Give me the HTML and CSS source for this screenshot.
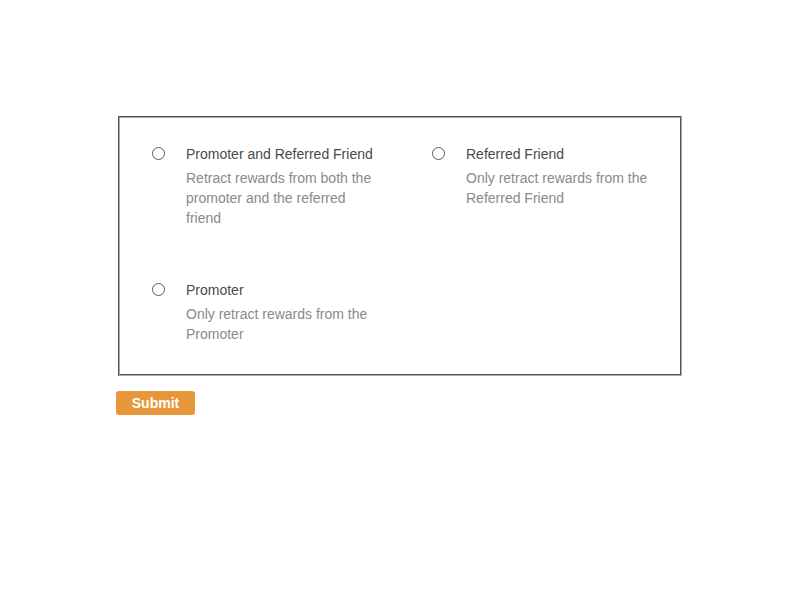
FILE: index.html
```html
<!DOCTYPE html>
<html>
<head>
<meta charset="utf-8">
<link rel="stylesheet" href="styles.css">
</head>
<body>
<form class="wrap">
  <fieldset class="box">
    <label class="opt">
      <input type="radio" name="retract" class="radio">
      <span class="txt">
        <span class="title">Promoter and Referred Friend</span>
        <span class="desc">Retract rewards from both the promoter and the referred friend</span>
      </span>
    </label>
    <label class="opt">
      <input type="radio" name="retract" class="radio">
      <span class="txt">
        <span class="title">Referred Friend</span>
        <span class="desc">Only retract rewards from the Referred Friend</span>
      </span>
    </label>
    <label class="opt">
      <input type="radio" name="retract" class="radio">
      <span class="txt">
        <span class="title">Promoter</span>
        <span class="desc">Only retract rewards from the Promoter</span>
      </span>
    </label>
  </fieldset>
  <button type="button" class="submit">Submit</button>
</form>
</body>
</html>
```
FILE: styles.css
```css
html, body {
  margin: 0;
  padding: 0;
  background: #fff;
}
body {
  font-family: "Liberation Sans", Arial, Helvetica, sans-serif;
  font-size: 14px;
  line-height: 20px;
}
.wrap {
  width: 568px;
  margin: 116px auto 0;
}
.box {
  margin: 0 2px;
  border: 2px groove #a8a8a8;
  padding: 26px 32px 30px;
  display: grid;
  grid-template-columns: 280px 240px;
  row-gap: 52px;
  min-width: 0;
}
.opt {
  display: flex;
  align-items: flex-start;
  cursor: pointer;
}
.radio {
  appearance: none;
  -webkit-appearance: none;
  width: 13px;
  height: 13px;
  margin: 3px 21px 0 0;
  border: 1px solid #5a5a5a;
  border-radius: 50%;
  background: #fff;
  flex: none;
}
.txt {
  display: flex;
  flex-direction: column;
  width: 190px;
}
.title {
  color: #4a4a4a;
}
.desc {
  color: #8a8a8a;
  margin-top: 4px;
}
.submit {
  margin-top: 15px;
  width: 79px;
  height: 24px;
  border: none;
  border-radius: 3px;
  background: #e8963a;
  color: #fff;
  font-family: "Liberation Sans", Arial, Helvetica, sans-serif;
  font-weight: bold;
  font-size: 14px;
  padding: 0;
  display: block;
}
```
